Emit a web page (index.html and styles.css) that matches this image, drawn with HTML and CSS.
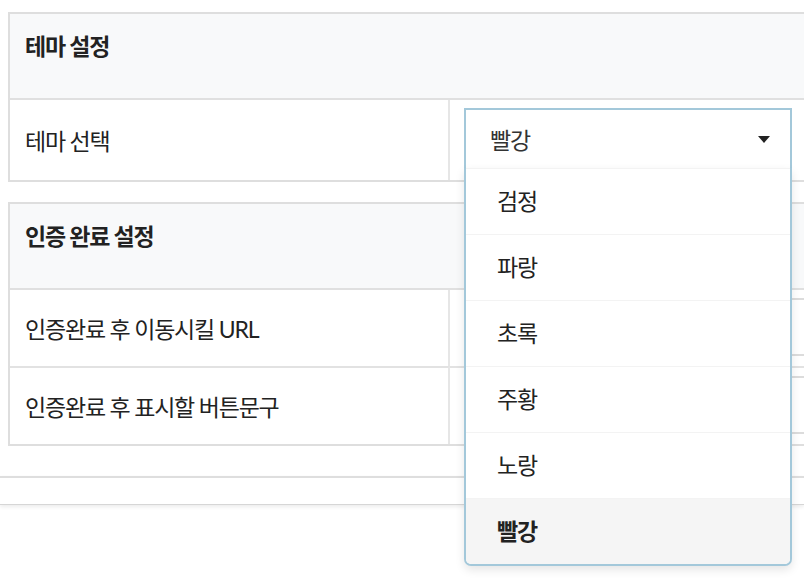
FILE: index.html
```html
<!DOCTYPE html>
<html lang="ko">
<head>
  <meta charset="UTF-8">
  <meta name="viewport" content="width=device-width, initial-scale=1.0">
  <title>테마 설정</title>
  <link rel="stylesheet" href="styles.css">
</head>
<body>
  <div class="panel">
    <div class="panel-body">
      <table class="setting-table">
        <colgroup><col class="col-label"><col></colgroup>
        <thead>
          <tr><th colspan="2">테마 설정</th></tr>
        </thead>
        <tbody>
          <tr class="row-tall">
            <td class="label">테마 선택</td>
            <td class="field">
              <div class="select">
                <div class="select-value">
                  <span>빨강</span>
                  <span class="caret"></span>
                </div>
                <ul class="select-menu">
                  <li>검정</li>
                  <li>파랑</li>
                  <li>초록</li>
                  <li>주황</li>
                  <li>노랑</li>
                  <li class="active">빨강</li>
                </ul>
              </div>
            </td>
          </tr>
        </tbody>
      </table>

      <table class="setting-table">
        <colgroup><col class="col-label"><col></colgroup>
        <thead>
          <tr><th colspan="2">인증 완료 설정</th></tr>
        </thead>
        <tbody>
          <tr>
            <td class="label">인증완료 후 이동시킬 URL</td>
            <td class="field"><input class="text-input" type="text"></td>
          </tr>
          <tr>
            <td class="label">인증완료 후 표시할 버튼문구</td>
            <td class="field"><input class="text-input" type="text"></td>
          </tr>
        </tbody>
      </table>
    </div>
    <div class="panel-footer"></div>
  </div>
</body>
</html>
```

FILE: styles.css
```css
body {
  margin: 0;
  min-height: 100vh;
  background: #fff;
  font-family: Lato, "Noto Sans CJK KR", sans-serif;
  font-size: 23px;
  letter-spacing: -1.2px;
  color: #222;
}
.panel {
  padding-bottom: 80px;
}
.panel-body {
  padding: 12px 0 30px 8px;
}
.setting-table {
  width: 100%;
  table-layout: fixed;
  border-collapse: separate;
  border-spacing: 0;
  border: 2px solid #dedede;
  border-right: none;
}
.setting-table + .setting-table {
  margin-top: 20px;
}
.col-label {
  width: 440px;
}
.setting-table th {
  background: #f8f9fa;
  text-align: left;
  font-weight: bold;
  line-height: 30px;
  padding: 17px 15px 37px;
  border-bottom: 2px solid #e0e0e0;
}
.setting-table td {
  height: 76px;
  padding: 0 15px;
  vertical-align: middle;
}
.setting-table tr + tr td {
  border-top: 2px solid #e2e2e2;
}
.setting-table .row-tall td {
  height: 80px;
}
.label {
  border-right: 2px solid #e6e6e6;
}
.setting-table td.field {
  padding: 0 0 0 14px;
  vertical-align: top;
}
.text-input {
  display: block;
  margin-top: 8px;
  width: 100%;
  height: 58px;
  box-sizing: border-box;
  border: 2px solid #dcdcdc;
  border-right: none;
  border-radius: 3px 0 0 3px;
  background: #fff;
}
.panel-footer {
  height: 26px;
  border-top: 2px solid #dedede;
  border-bottom: 1px solid #d6d6d6;
  box-shadow: 0 2px 4px rgba(0, 0, 0, 0.08);
}

/* select, shown open */
.select {
  position: relative;
  margin-top: 8px;
  width: 328px;
  box-sizing: border-box;
  border: 2px solid #a3c8da;
  border-bottom: none;
  background: #fff;
}
.select-value {
  height: 58px;
  display: flex;
  align-items: center;
  justify-content: space-between;
  padding: 0 20px 0 24px;
  color: #333;
}
.caret {
  width: 0;
  height: 0;
  border-left: 6px solid transparent;
  border-right: 6px solid transparent;
  border-top: 7px solid #222;
}
.select-menu {
  position: absolute;
  top: 100%;
  left: -2px;
  right: -2px;
  margin: 0;
  padding: 0;
  list-style: none;
  background: #fff;
  border: 2px solid #a3c8da;
  border-top: none;
  border-radius: 0 0 7px 7px;
  overflow: hidden;
  box-shadow: 0 4px 10px rgba(0, 0, 0, 0.1);
  z-index: 10;
}
.select-menu li {
  height: 65px;
  line-height: 65px;
  padding-left: 31px;
  border-top: 1px solid #f3f3f3;
}
.select-menu li.active {
  background: #f5f5f5;
  font-weight: bold;
}
```
